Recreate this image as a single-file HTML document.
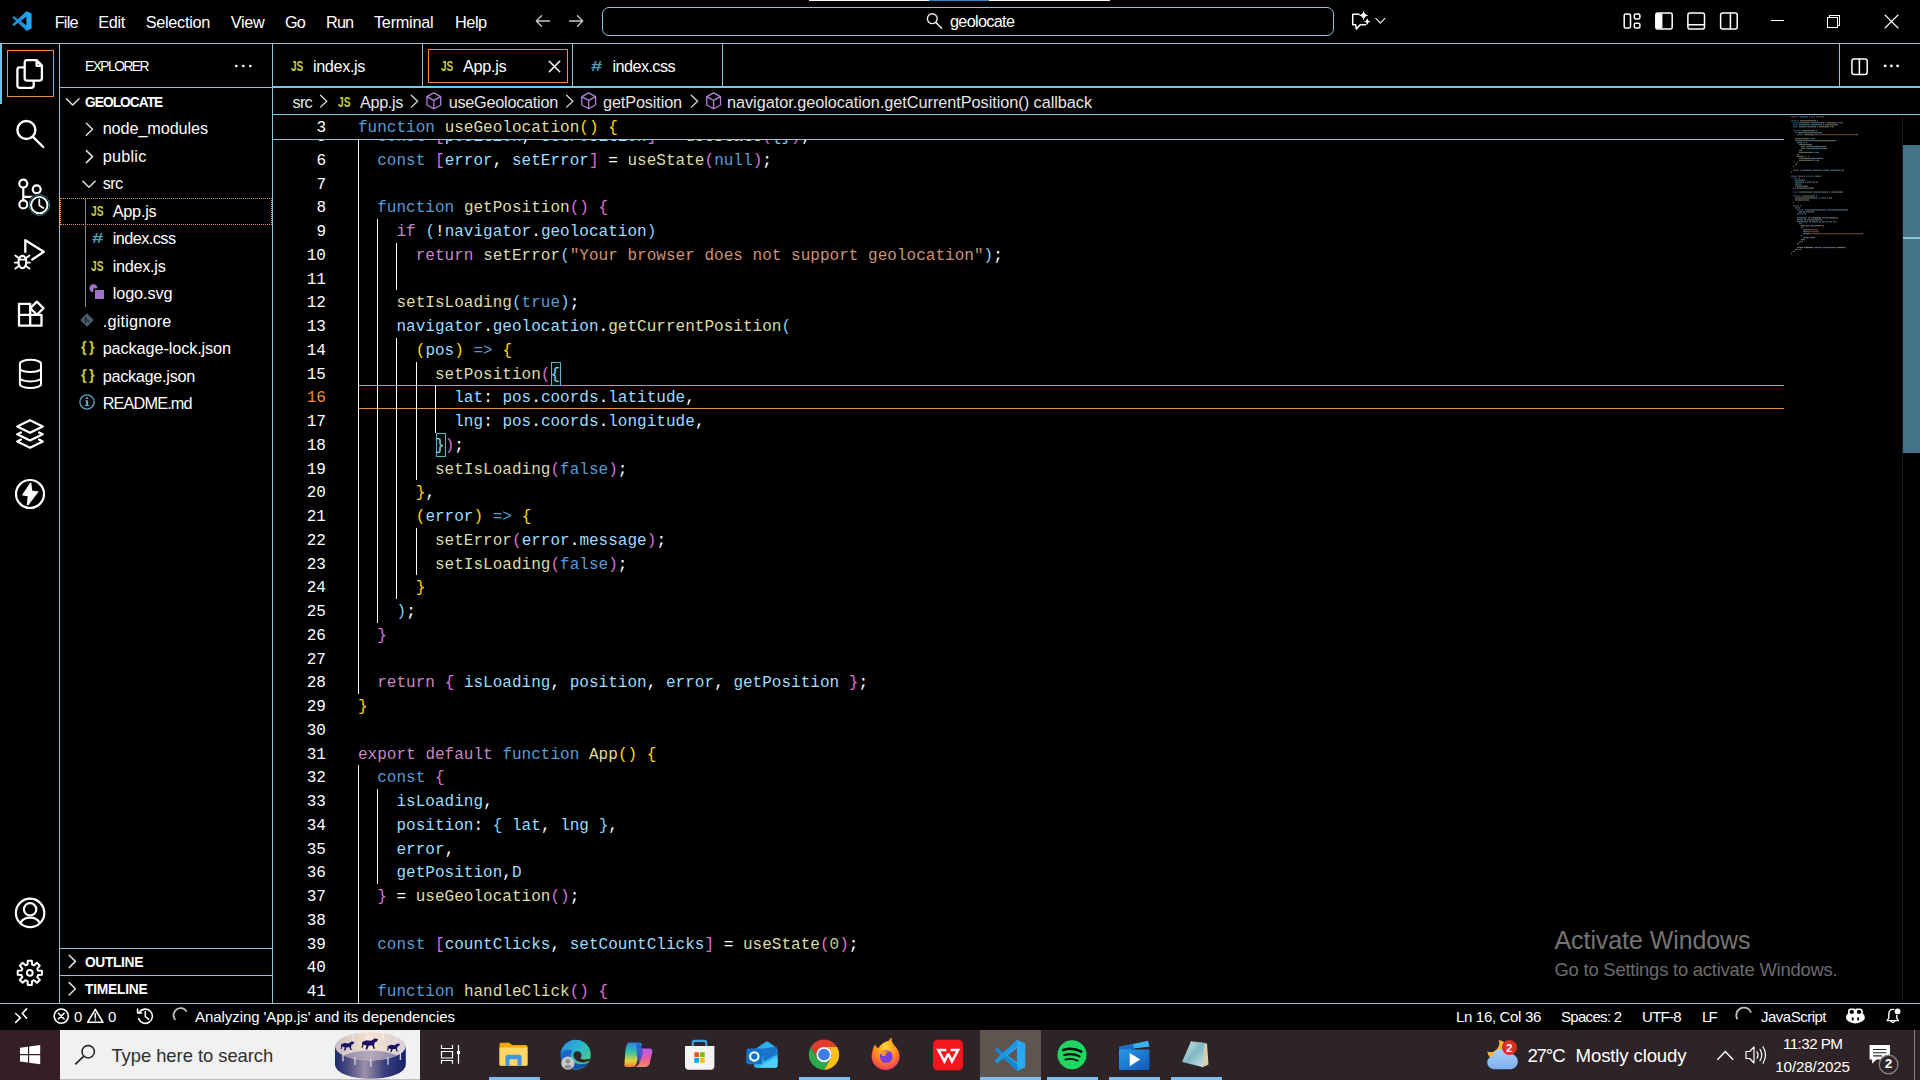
<!DOCTYPE html>
<html lang="en"><head><meta charset="utf-8"><title>App.js - geolocate - Visual Studio Code</title>
<style>
html,body{margin:0;padding:0;background:#000;}
body{width:1920px;height:1080px;overflow:hidden;position:relative;font-family:"Liberation Sans", sans-serif;color:#fff;}
body div,body span,body svg,body pre{position:absolute;white-space:pre;margin:0;}
pre.code{font-family:"Liberation Mono", monospace;font-size:16px;letter-spacing:0.022px;line-height:23.75px;color:#fff;}
pre.code i{font-style:normal;}
.k{color:#569CD6}.c{color:#C586C0}.f{color:#DCDCAA}.v{color:#9CDCFE}.s{color:#CE9178}.n{color:#B5CEA8}
.b1{color:#FFD700}.b2{color:#DA70D6}.b3{color:#87CEFA}
</style></head><body>
<div style="left:0px;top:43px;width:1920px;height:1px;background:#8EC5D8;"></div>
<div style="left:809px;top:0px;width:301px;height:1px;background:#ffffff;"></div>
<div style="left:929px;top:0px;width:60px;height:1px;background:#3A7FBC;"></div>
<div style="left:59px;top:44px;width:1px;height:959px;background:#8EC5D8;"></div>
<div style="left:0px;top:44px;width:2px;height:60px;background:#6FC3DF;"></div>
<div style="left:7px;top:50px;width:47px;height:47px;box-sizing:border-box;border:1px solid #EF8F3A;"></div>
<div style="left:272px;top:44px;width:1px;height:959px;background:#8EC5D8;"></div>
<div style="left:60px;top:87px;width:213px;height:1px;background:#8EC5D8;"></div>
<div style="left:273px;top:86px;width:1647px;height:2px;background:#7CC6E0;"></div>
<div style="left:273px;top:114px;width:1647px;height:1px;background:#8EC5D8;"></div>
<div style="left:273px;top:139px;width:1511px;height:1px;background:#8EC5D8;"></div>
<div style="left:60px;top:948px;width:212px;height:1px;background:#8EC5D8;"></div>
<div style="left:60px;top:975px;width:212px;height:1px;background:#8EC5D8;"></div>
<div style="left:0px;top:1003px;width:1920px;height:1px;background:#8EC5D8;"></div>
<div style="left:422px;top:44px;width:1px;height:42px;background:#8EC5D8;"></div>
<div style="left:572px;top:44px;width:1px;height:42px;background:#8EC5D8;"></div>
<div style="left:722px;top:44px;width:1px;height:42px;background:#8EC5D8;"></div>
<div style="left:1839px;top:44px;width:1px;height:42px;background:#8EC5D8;"></div>
<div style="left:428px;top:49px;width:140px;height:34px;box-sizing:border-box;border:1px solid #EF8F3A;"></div>
<div style="left:602px;top:7px;width:732px;height:29px;box-sizing:border-box;border:1px solid #8EC5D8;border-radius:7px;"></div>
<span style="left:54.7px;top:11.02px;font-size:16.25px;line-height:22.75px;color:#fff;letter-spacing:-0.747px;">File</span>
<span style="left:98.3px;top:11.02px;font-size:16.25px;line-height:22.75px;color:#fff;letter-spacing:-0.329px;">Edit</span>
<span style="left:145.7px;top:11.02px;font-size:16.25px;line-height:22.75px;color:#fff;letter-spacing:-0.284px;">Selection</span>
<span style="left:230.7px;top:11.02px;font-size:16.25px;line-height:22.75px;color:#fff;letter-spacing:-0.334px;">View</span>
<span style="left:285px;top:11.02px;font-size:16.25px;line-height:22.75px;color:#fff;letter-spacing:-0.994px;">Go</span>
<span style="left:326px;top:11.02px;font-size:16.25px;line-height:22.75px;color:#fff;letter-spacing:-0.837px;">Run</span>
<span style="left:374px;top:11.02px;font-size:16.25px;line-height:22.75px;color:#fff;letter-spacing:-0.263px;">Terminal</span>
<span style="left:455px;top:11.02px;font-size:16.25px;line-height:22.75px;color:#fff;letter-spacing:-0.430px;">Help</span>
<span style="left:950px;top:9.93px;font-size:16.25px;line-height:22.75px;color:#fff;letter-spacing:-0.687px;">geolocate</span>
<span style="left:85px;top:57.17px;font-size:13.75px;line-height:19.25px;color:#fff;letter-spacing:-1.486px;">EXPLORER</span>
<span style="left:85px;top:92.58px;font-size:13.75px;line-height:19.25px;color:#fff;letter-spacing:-0.975px;font-weight:700;">GEOLOCATE</span>
<span style="left:102.7px;top:116.82px;font-size:16.25px;line-height:22.75px;color:#fff;letter-spacing:-0.109px;">node_modules</span>
<span style="left:102.7px;top:145.03px;font-size:16.25px;line-height:22.75px;color:#fff;letter-spacing:0.222px;">public</span>
<span style="left:102.7px;top:172.12px;font-size:16.25px;line-height:22.75px;color:#fff;letter-spacing:-0.624px;">src</span>
<span style="left:112.7px;top:200.22px;font-size:16.25px;line-height:22.75px;color:#fff;letter-spacing:-0.229px;">App.js</span>
<span style="left:112.7px;top:227.03px;font-size:16.25px;line-height:22.75px;color:#fff;letter-spacing:-0.550px;">index.css</span>
<span style="left:112.7px;top:255.02px;font-size:16.25px;line-height:22.75px;color:#fff;letter-spacing:-0.289px;">index.js</span>
<span style="left:112.7px;top:282.02px;font-size:16.25px;line-height:22.75px;color:#fff;letter-spacing:-0.091px;">logo.svg</span>
<span style="left:102.7px;top:310.12px;font-size:16.25px;line-height:22.75px;color:#fff;letter-spacing:0.194px;">.gitignore</span>
<span style="left:102.7px;top:336.82px;font-size:16.25px;line-height:22.75px;color:#fff;letter-spacing:-0.105px;">package-lock.json</span>
<span style="left:102.7px;top:364.93px;font-size:16.25px;line-height:22.75px;color:#fff;letter-spacing:-0.289px;">package.json</span>
<span style="left:102.7px;top:391.93px;font-size:16.25px;line-height:22.75px;color:#fff;letter-spacing:-0.847px;">README.md</span>
<div style="left:60px;top:198px;width:212px;height:27px;box-sizing:border-box;border:1px dotted #EF8F3A;"></div>
<div style="left:85px;top:198px;width:1px;height:109px;background:#8a8a8a;"></div>
<span style="left:85px;top:952.58px;font-size:13.75px;line-height:19.25px;color:#fff;letter-spacing:-0.337px;font-weight:700;">OUTLINE</span>
<span style="left:85px;top:980.08px;font-size:13.75px;line-height:19.25px;color:#fff;letter-spacing:-0.209px;font-weight:700;">TIMELINE</span>
<span style="left:313px;top:54.62px;font-size:16.25px;line-height:22.75px;color:#fff;letter-spacing:-0.389px;">index.js</span>
<span style="left:463px;top:54.62px;font-size:16.25px;line-height:22.75px;color:#fff;letter-spacing:-0.312px;">App.js</span>
<span style="left:612.5px;top:54.62px;font-size:16.25px;line-height:22.75px;color:#fff;letter-spacing:-0.583px;">index.css</span>
<span style="left:292.5px;top:91.42px;font-size:16.25px;line-height:22.75px;color:#e6e6e6;letter-spacing:-0.724px;">src</span>
<span style="left:360px;top:91.42px;font-size:16.25px;line-height:22.75px;color:#e6e6e6;letter-spacing:-0.362px;">App.js</span>
<span style="left:448.7px;top:91.42px;font-size:16.25px;line-height:22.75px;color:#e6e6e6;letter-spacing:-0.260px;">useGeolocation</span>
<span style="left:603px;top:91.42px;font-size:16.25px;line-height:22.75px;color:#e6e6e6;letter-spacing:-0.128px;">getPosition</span>
<span style="left:727px;top:91.42px;font-size:16.25px;line-height:22.75px;color:#e6e6e6;letter-spacing:-0.034px;">navigator.geolocation.getCurrentPosition() callback</span>
<span style="left:74px;top:1006.0px;font-size:15px;line-height:21.0px;color:#fff;letter-spacing:-0.344px;">0</span>
<span style="left:108px;top:1006.0px;font-size:15px;line-height:21.0px;color:#fff;letter-spacing:-0.344px;">0</span>
<span style="left:195px;top:1006.0px;font-size:15px;line-height:21.0px;color:#fff;letter-spacing:-0.066px;">Analyzing 'App.js' and its dependencies</span>
<span style="left:1456px;top:1006.0px;font-size:15px;line-height:21.0px;color:#fff;letter-spacing:-0.326px;">Ln 16, Col 36</span>
<span style="left:1561px;top:1006.0px;font-size:15px;line-height:21.0px;color:#fff;letter-spacing:-0.691px;">Spaces: 2</span>
<span style="left:1642px;top:1006.0px;font-size:15px;line-height:21.0px;color:#fff;letter-spacing:-0.700px;">UTF-8</span>
<span style="left:1702px;top:1006.0px;font-size:15px;line-height:21.0px;color:#fff;letter-spacing:-1.758px;">LF</span>
<span style="left:1761px;top:1006.0px;font-size:15px;line-height:21.0px;color:#fff;letter-spacing:-0.503px;">JavaScript</span>
<div style="left:273px;top:140px;width:1517px;height:863px;overflow:hidden;">
<div style="left:85px;top:245px;width:1426px;height:24px;box-sizing:border-box;border-top:1px solid #EF8F3A;border-bottom:1px solid #EF8F3A;"></div>
<div style="left:85px;top:-16.0px;width:1px;height:570.0px;background:#ffffff;"></div>
<div style="left:104px;top:79.0px;width:1px;height:403.75px;background:#ffffff;"></div>
<div style="left:123px;top:102.75px;width:1px;height:47.5px;background:#ffffff;"></div>
<div style="left:123px;top:197.75px;width:1px;height:261.25px;background:#ffffff;"></div>
<div style="left:143px;top:221.5px;width:1px;height:118.75px;background:#ffffff;"></div>
<div style="left:143px;top:387.75px;width:1px;height:47.5px;background:#ffffff;"></div>
<div style="left:162px;top:245.25px;width:1px;height:47.5px;background:#ffffff;"></div>
<div style="left:85px;top:625.25px;width:1px;height:237.5px;background:#ffffff;"></div>
<div style="left:104px;top:649.0px;width:1px;height:95.0px;background:#ffffff;"></div>
<div style="left:278px;top:221.5px;width:10px;height:24px;box-sizing:border-box;border:1px solid #5fb0c8;background:#02120b;"></div>
<div style="left:163px;top:292.75px;width:10px;height:24px;box-sizing:border-box;border:1px solid #5fb0c8;background:#02120b;"></div>
<pre class="code" style="left:85px;top:-14.0px;">  <i class="k">const</i> <i class="b2">[</i><i class="v">position</i>, <i class="v">setPosition</i><i class="b2">]</i> = <i class="f">useState</i><i class="b2">(</i><i class="b3">{}</i><i class="b2">)</i>;</pre>
<pre class="code" style="left:0px;top:-14.0px;width:53px;text-align:right;color:#fff;">5</pre>
<pre class="code" style="left:85px;top:9.75px;">  <i class="k">const</i> <i class="b2">[</i><i class="v">error</i>, <i class="v">setError</i><i class="b2">]</i> = <i class="f">useState</i><i class="b2">(</i><i class="k">null</i><i class="b2">)</i>;</pre>
<pre class="code" style="left:0px;top:9.75px;width:53px;text-align:right;color:#fff;">6</pre>
<pre class="code" style="left:85px;top:33.5px;"></pre>
<pre class="code" style="left:0px;top:33.5px;width:53px;text-align:right;color:#fff;">7</pre>
<pre class="code" style="left:85px;top:57.25px;">  <i class="k">function</i> <i class="f">getPosition</i><i class="b2">()</i> <i class="b2">{</i></pre>
<pre class="code" style="left:0px;top:57.25px;width:53px;text-align:right;color:#fff;">8</pre>
<pre class="code" style="left:85px;top:81.0px;">    <i class="c">if</i> <i class="b3">(</i>!<i class="v">navigator</i>.<i class="v">geolocation</i><i class="b3">)</i></pre>
<pre class="code" style="left:0px;top:81.0px;width:53px;text-align:right;color:#fff;">9</pre>
<pre class="code" style="left:85px;top:104.75px;">      <i class="c">return</i> <i class="f">setError</i><i class="b3">(</i><i class="s">"Your browser does not support geolocation"</i><i class="b3">)</i>;</pre>
<pre class="code" style="left:0px;top:104.75px;width:53px;text-align:right;color:#fff;">10</pre>
<pre class="code" style="left:85px;top:128.5px;"></pre>
<pre class="code" style="left:0px;top:128.5px;width:53px;text-align:right;color:#fff;">11</pre>
<pre class="code" style="left:85px;top:152.25px;">    <i class="f">setIsLoading</i><i class="b3">(</i><i class="k">true</i><i class="b3">)</i>;</pre>
<pre class="code" style="left:0px;top:152.25px;width:53px;text-align:right;color:#fff;">12</pre>
<pre class="code" style="left:85px;top:176.0px;">    <i class="v">navigator</i>.<i class="v">geolocation</i>.<i class="f">getCurrentPosition</i><i class="b3">(</i></pre>
<pre class="code" style="left:0px;top:176.0px;width:53px;text-align:right;color:#fff;">13</pre>
<pre class="code" style="left:85px;top:199.75px;">      <i class="b1">(</i><i class="v">pos</i><i class="b1">)</i> <i class="k">=&gt;</i> <i class="b1">{</i></pre>
<pre class="code" style="left:0px;top:199.75px;width:53px;text-align:right;color:#fff;">14</pre>
<pre class="code" style="left:85px;top:223.5px;">        <i class="f">setPosition</i><i class="b2">(</i><i class="b3">{</i></pre>
<pre class="code" style="left:0px;top:223.5px;width:53px;text-align:right;color:#fff;">15</pre>
<pre class="code" style="left:85px;top:247.25px;">          <i class="v">lat</i>: <i class="v">pos</i>.<i class="v">coords</i>.<i class="v">latitude</i>,</pre>
<pre class="code" style="left:0px;top:247.25px;width:53px;text-align:right;color:#EF8F3A;">16</pre>
<pre class="code" style="left:85px;top:271.0px;">          <i class="v">lng</i>: <i class="v">pos</i>.<i class="v">coords</i>.<i class="v">longitude</i>,</pre>
<pre class="code" style="left:0px;top:271.0px;width:53px;text-align:right;color:#fff;">17</pre>
<pre class="code" style="left:85px;top:294.75px;">        <i class="b3">}</i><i class="b2">)</i>;</pre>
<pre class="code" style="left:0px;top:294.75px;width:53px;text-align:right;color:#fff;">18</pre>
<pre class="code" style="left:85px;top:318.5px;">        <i class="f">setIsLoading</i><i class="b2">(</i><i class="k">false</i><i class="b2">)</i>;</pre>
<pre class="code" style="left:0px;top:318.5px;width:53px;text-align:right;color:#fff;">19</pre>
<pre class="code" style="left:85px;top:342.25px;">      <i class="b1">}</i>,</pre>
<pre class="code" style="left:0px;top:342.25px;width:53px;text-align:right;color:#fff;">20</pre>
<pre class="code" style="left:85px;top:366.0px;">      <i class="b1">(</i><i class="v">error</i><i class="b1">)</i> <i class="k">=&gt;</i> <i class="b1">{</i></pre>
<pre class="code" style="left:0px;top:366.0px;width:53px;text-align:right;color:#fff;">21</pre>
<pre class="code" style="left:85px;top:389.75px;">        <i class="f">setError</i><i class="b2">(</i><i class="v">error</i>.<i class="v">message</i><i class="b2">)</i>;</pre>
<pre class="code" style="left:0px;top:389.75px;width:53px;text-align:right;color:#fff;">22</pre>
<pre class="code" style="left:85px;top:413.5px;">        <i class="f">setIsLoading</i><i class="b2">(</i><i class="k">false</i><i class="b2">)</i>;</pre>
<pre class="code" style="left:0px;top:413.5px;width:53px;text-align:right;color:#fff;">23</pre>
<pre class="code" style="left:85px;top:437.25px;">      <i class="b1">}</i></pre>
<pre class="code" style="left:0px;top:437.25px;width:53px;text-align:right;color:#fff;">24</pre>
<pre class="code" style="left:85px;top:461.0px;">    <i class="b3">)</i>;</pre>
<pre class="code" style="left:0px;top:461.0px;width:53px;text-align:right;color:#fff;">25</pre>
<pre class="code" style="left:85px;top:484.75px;">  <i class="b2">}</i></pre>
<pre class="code" style="left:0px;top:484.75px;width:53px;text-align:right;color:#fff;">26</pre>
<pre class="code" style="left:85px;top:508.5px;"></pre>
<pre class="code" style="left:0px;top:508.5px;width:53px;text-align:right;color:#fff;">27</pre>
<pre class="code" style="left:85px;top:532.25px;">  <i class="c">return</i> <i class="b2">{</i> <i class="v">isLoading</i>, <i class="v">position</i>, <i class="v">error</i>, <i class="v">getPosition</i> <i class="b2">}</i>;</pre>
<pre class="code" style="left:0px;top:532.25px;width:53px;text-align:right;color:#fff;">28</pre>
<pre class="code" style="left:85px;top:556.0px;"><i class="b1">}</i></pre>
<pre class="code" style="left:0px;top:556.0px;width:53px;text-align:right;color:#fff;">29</pre>
<pre class="code" style="left:85px;top:579.75px;"></pre>
<pre class="code" style="left:0px;top:579.75px;width:53px;text-align:right;color:#fff;">30</pre>
<pre class="code" style="left:85px;top:603.5px;"><i class="c">export</i> <i class="c">default</i> <i class="k">function</i> <i class="f">App</i><i class="b1">()</i> <i class="b1">{</i></pre>
<pre class="code" style="left:0px;top:603.5px;width:53px;text-align:right;color:#fff;">31</pre>
<pre class="code" style="left:85px;top:627.25px;">  <i class="k">const</i> <i class="b2">{</i></pre>
<pre class="code" style="left:0px;top:627.25px;width:53px;text-align:right;color:#fff;">32</pre>
<pre class="code" style="left:85px;top:651.0px;">    <i class="v">isLoading</i>,</pre>
<pre class="code" style="left:0px;top:651.0px;width:53px;text-align:right;color:#fff;">33</pre>
<pre class="code" style="left:85px;top:674.75px;">    <i class="v">position</i>: <i class="b3">{</i> <i class="v">lat</i>, <i class="v">lng</i> <i class="b3">}</i>,</pre>
<pre class="code" style="left:0px;top:674.75px;width:53px;text-align:right;color:#fff;">34</pre>
<pre class="code" style="left:85px;top:698.5px;">    <i class="v">error</i>,</pre>
<pre class="code" style="left:0px;top:698.5px;width:53px;text-align:right;color:#fff;">35</pre>
<pre class="code" style="left:85px;top:722.25px;">    <i class="v">getPosition</i>,<i class="v">D</i></pre>
<pre class="code" style="left:0px;top:722.25px;width:53px;text-align:right;color:#fff;">36</pre>
<pre class="code" style="left:85px;top:746.0px;">  <i class="b2">}</i> = <i class="f">useGeolocation</i><i class="b2">()</i>;</pre>
<pre class="code" style="left:0px;top:746.0px;width:53px;text-align:right;color:#fff;">37</pre>
<pre class="code" style="left:85px;top:769.75px;"></pre>
<pre class="code" style="left:0px;top:769.75px;width:53px;text-align:right;color:#fff;">38</pre>
<pre class="code" style="left:85px;top:793.5px;">  <i class="k">const</i> <i class="b2">[</i><i class="v">countClicks</i>, <i class="v">setCountClicks</i><i class="b2">]</i> = <i class="f">useState</i><i class="b2">(</i><i class="n">0</i><i class="b2">)</i>;</pre>
<pre class="code" style="left:0px;top:793.5px;width:53px;text-align:right;color:#fff;">39</pre>
<pre class="code" style="left:85px;top:817.25px;"></pre>
<pre class="code" style="left:0px;top:817.25px;width:53px;text-align:right;color:#fff;">40</pre>
<pre class="code" style="left:85px;top:841.0px;">  <i class="k">function</i> <i class="f">handleClick</i><i class="b2">()</i> <i class="b2">{</i></pre>
<pre class="code" style="left:0px;top:841.0px;width:53px;text-align:right;color:#fff;">41</pre>
</div>
<pre class="code" style="left:358px;top:116.6px;"><i class="k">function</i> <i class="f">useGeolocation</i><i class="b1">()</i> <i class="b1">{</i></pre>
<pre class="code" style="left:273px;top:116.6px;width:53px;text-align:right;">3</pre>
<div style="left:1903px;top:145px;width:17px;height:308px;background:#44738A;"></div>
<div style="left:1903px;top:237px;width:17px;height:2px;background:#86C2D8;"></div>
<div style="left:1902px;top:115px;width:1px;height:888px;background:#1a1a1a;"></div>
<svg style="left:0;top:0;opacity:.42" width="1920" height="300" viewBox="0 0 1920 300"><rect x="1791" y="116.20" width="6" height="1.25" fill="#C586C0"/><rect x="1798" y="116.20" width="1" height="1.25" fill="#e8e8e8"/><rect x="1800" y="116.20" width="8" height="1.25" fill="#9CDCFE"/><rect x="1809" y="116.20" width="1" height="1.25" fill="#e8e8e8"/><rect x="1811" y="116.20" width="4" height="1.25" fill="#C586C0"/><rect x="1816" y="116.20" width="7" height="1.25" fill="#CE9178"/><rect x="1823" y="116.20" width="1" height="1.25" fill="#e8e8e8"/><rect x="1791" y="120.16" width="8" height="1.25" fill="#569CD6"/><rect x="1800" y="120.16" width="14" height="1.25" fill="#DCDCAA"/><rect x="1814" y="120.16" width="2" height="1.25" fill="#e8e8e8"/><rect x="1817" y="120.16" width="1" height="1.25" fill="#e8e8e8"/><rect x="1793" y="122.14" width="5" height="1.25" fill="#569CD6"/><rect x="1799" y="122.14" width="1" height="1.25" fill="#e8e8e8"/><rect x="1800" y="122.14" width="9" height="1.25" fill="#9CDCFE"/><rect x="1809" y="122.14" width="1" height="1.25" fill="#e8e8e8"/><rect x="1811" y="122.14" width="12" height="1.25" fill="#9CDCFE"/><rect x="1823" y="122.14" width="1" height="1.25" fill="#e8e8e8"/><rect x="1825" y="122.14" width="1" height="1.25" fill="#e8e8e8"/><rect x="1827" y="122.14" width="8" height="1.25" fill="#DCDCAA"/><rect x="1835" y="122.14" width="1" height="1.25" fill="#e8e8e8"/><rect x="1836" y="122.14" width="5" height="1.25" fill="#569CD6"/><rect x="1841" y="122.14" width="2" height="1.25" fill="#e8e8e8"/><rect x="1793" y="124.12" width="5" height="1.25" fill="#569CD6"/><rect x="1799" y="124.12" width="1" height="1.25" fill="#e8e8e8"/><rect x="1800" y="124.12" width="8" height="1.25" fill="#9CDCFE"/><rect x="1808" y="124.12" width="1" height="1.25" fill="#e8e8e8"/><rect x="1810" y="124.12" width="11" height="1.25" fill="#9CDCFE"/><rect x="1821" y="124.12" width="1" height="1.25" fill="#e8e8e8"/><rect x="1823" y="124.12" width="1" height="1.25" fill="#e8e8e8"/><rect x="1825" y="124.12" width="8" height="1.25" fill="#DCDCAA"/><rect x="1833" y="124.12" width="5" height="1.25" fill="#e8e8e8"/><rect x="1793" y="126.10" width="5" height="1.25" fill="#569CD6"/><rect x="1799" y="126.10" width="1" height="1.25" fill="#e8e8e8"/><rect x="1800" y="126.10" width="5" height="1.25" fill="#9CDCFE"/><rect x="1805" y="126.10" width="1" height="1.25" fill="#e8e8e8"/><rect x="1807" y="126.10" width="8" height="1.25" fill="#9CDCFE"/><rect x="1815" y="126.10" width="1" height="1.25" fill="#e8e8e8"/><rect x="1817" y="126.10" width="1" height="1.25" fill="#e8e8e8"/><rect x="1819" y="126.10" width="8" height="1.25" fill="#DCDCAA"/><rect x="1827" y="126.10" width="1" height="1.25" fill="#e8e8e8"/><rect x="1828" y="126.10" width="4" height="1.25" fill="#569CD6"/><rect x="1832" y="126.10" width="2" height="1.25" fill="#e8e8e8"/><rect x="1793" y="130.06" width="8" height="1.25" fill="#569CD6"/><rect x="1802" y="130.06" width="11" height="1.25" fill="#DCDCAA"/><rect x="1813" y="130.06" width="2" height="1.25" fill="#e8e8e8"/><rect x="1816" y="130.06" width="1" height="1.25" fill="#e8e8e8"/><rect x="1795" y="132.04" width="2" height="1.25" fill="#C586C0"/><rect x="1798" y="132.04" width="2" height="1.25" fill="#e8e8e8"/><rect x="1800" y="132.04" width="9" height="1.25" fill="#9CDCFE"/><rect x="1809" y="132.04" width="1" height="1.25" fill="#e8e8e8"/><rect x="1810" y="132.04" width="11" height="1.25" fill="#9CDCFE"/><rect x="1821" y="132.04" width="1" height="1.25" fill="#e8e8e8"/><rect x="1797" y="134.02" width="6" height="1.25" fill="#C586C0"/><rect x="1804" y="134.02" width="8" height="1.25" fill="#DCDCAA"/><rect x="1812" y="134.02" width="1" height="1.25" fill="#e8e8e8"/><rect x="1813" y="134.02" width="43" height="1.25" fill="#CE9178"/><rect x="1856" y="134.02" width="2" height="1.25" fill="#e8e8e8"/><rect x="1795" y="137.98" width="12" height="1.25" fill="#DCDCAA"/><rect x="1807" y="137.98" width="1" height="1.25" fill="#e8e8e8"/><rect x="1808" y="137.98" width="4" height="1.25" fill="#569CD6"/><rect x="1812" y="137.98" width="2" height="1.25" fill="#e8e8e8"/><rect x="1795" y="139.96" width="9" height="1.25" fill="#9CDCFE"/><rect x="1804" y="139.96" width="1" height="1.25" fill="#e8e8e8"/><rect x="1805" y="139.96" width="11" height="1.25" fill="#9CDCFE"/><rect x="1816" y="139.96" width="1" height="1.25" fill="#e8e8e8"/><rect x="1817" y="139.96" width="18" height="1.25" fill="#DCDCAA"/><rect x="1835" y="139.96" width="1" height="1.25" fill="#e8e8e8"/><rect x="1797" y="141.94" width="1" height="1.25" fill="#e8e8e8"/><rect x="1798" y="141.94" width="3" height="1.25" fill="#9CDCFE"/><rect x="1801" y="141.94" width="1" height="1.25" fill="#e8e8e8"/><rect x="1803" y="141.94" width="2" height="1.25" fill="#569CD6"/><rect x="1806" y="141.94" width="1" height="1.25" fill="#e8e8e8"/><rect x="1799" y="143.92" width="11" height="1.25" fill="#DCDCAA"/><rect x="1810" y="143.92" width="2" height="1.25" fill="#e8e8e8"/><rect x="1801" y="145.90" width="3" height="1.25" fill="#9CDCFE"/><rect x="1804" y="145.90" width="1" height="1.25" fill="#e8e8e8"/><rect x="1806" y="145.90" width="3" height="1.25" fill="#9CDCFE"/><rect x="1809" y="145.90" width="1" height="1.25" fill="#e8e8e8"/><rect x="1810" y="145.90" width="6" height="1.25" fill="#9CDCFE"/><rect x="1816" y="145.90" width="1" height="1.25" fill="#e8e8e8"/><rect x="1817" y="145.90" width="8" height="1.25" fill="#9CDCFE"/><rect x="1825" y="145.90" width="1" height="1.25" fill="#e8e8e8"/><rect x="1801" y="147.88" width="3" height="1.25" fill="#9CDCFE"/><rect x="1804" y="147.88" width="1" height="1.25" fill="#e8e8e8"/><rect x="1806" y="147.88" width="3" height="1.25" fill="#9CDCFE"/><rect x="1809" y="147.88" width="1" height="1.25" fill="#e8e8e8"/><rect x="1810" y="147.88" width="6" height="1.25" fill="#9CDCFE"/><rect x="1816" y="147.88" width="1" height="1.25" fill="#e8e8e8"/><rect x="1817" y="147.88" width="9" height="1.25" fill="#9CDCFE"/><rect x="1826" y="147.88" width="1" height="1.25" fill="#e8e8e8"/><rect x="1799" y="149.86" width="3" height="1.25" fill="#e8e8e8"/><rect x="1799" y="151.84" width="12" height="1.25" fill="#DCDCAA"/><rect x="1811" y="151.84" width="1" height="1.25" fill="#e8e8e8"/><rect x="1812" y="151.84" width="5" height="1.25" fill="#569CD6"/><rect x="1817" y="151.84" width="2" height="1.25" fill="#e8e8e8"/><rect x="1797" y="153.82" width="2" height="1.25" fill="#e8e8e8"/><rect x="1797" y="155.80" width="1" height="1.25" fill="#e8e8e8"/><rect x="1798" y="155.80" width="5" height="1.25" fill="#9CDCFE"/><rect x="1803" y="155.80" width="1" height="1.25" fill="#e8e8e8"/><rect x="1805" y="155.80" width="2" height="1.25" fill="#569CD6"/><rect x="1808" y="155.80" width="1" height="1.25" fill="#e8e8e8"/><rect x="1799" y="157.78" width="8" height="1.25" fill="#DCDCAA"/><rect x="1807" y="157.78" width="1" height="1.25" fill="#e8e8e8"/><rect x="1808" y="157.78" width="5" height="1.25" fill="#9CDCFE"/><rect x="1813" y="157.78" width="1" height="1.25" fill="#e8e8e8"/><rect x="1814" y="157.78" width="7" height="1.25" fill="#9CDCFE"/><rect x="1821" y="157.78" width="2" height="1.25" fill="#e8e8e8"/><rect x="1799" y="159.76" width="12" height="1.25" fill="#DCDCAA"/><rect x="1811" y="159.76" width="1" height="1.25" fill="#e8e8e8"/><rect x="1812" y="159.76" width="5" height="1.25" fill="#569CD6"/><rect x="1817" y="159.76" width="2" height="1.25" fill="#e8e8e8"/><rect x="1797" y="161.74" width="1" height="1.25" fill="#e8e8e8"/><rect x="1795" y="163.72" width="2" height="1.25" fill="#e8e8e8"/><rect x="1793" y="165.70" width="1" height="1.25" fill="#e8e8e8"/><rect x="1793" y="169.66" width="6" height="1.25" fill="#C586C0"/><rect x="1800" y="169.66" width="1" height="1.25" fill="#e8e8e8"/><rect x="1802" y="169.66" width="9" height="1.25" fill="#9CDCFE"/><rect x="1811" y="169.66" width="1" height="1.25" fill="#e8e8e8"/><rect x="1813" y="169.66" width="8" height="1.25" fill="#9CDCFE"/><rect x="1821" y="169.66" width="1" height="1.25" fill="#e8e8e8"/><rect x="1823" y="169.66" width="5" height="1.25" fill="#9CDCFE"/><rect x="1828" y="169.66" width="1" height="1.25" fill="#e8e8e8"/><rect x="1830" y="169.66" width="11" height="1.25" fill="#9CDCFE"/><rect x="1842" y="169.66" width="2" height="1.25" fill="#e8e8e8"/><rect x="1791" y="171.64" width="1" height="1.25" fill="#e8e8e8"/><rect x="1791" y="175.60" width="6" height="1.25" fill="#C586C0"/><rect x="1798" y="175.60" width="7" height="1.25" fill="#C586C0"/><rect x="1806" y="175.60" width="8" height="1.25" fill="#569CD6"/><rect x="1815" y="175.60" width="3" height="1.25" fill="#DCDCAA"/><rect x="1818" y="175.60" width="2" height="1.25" fill="#e8e8e8"/><rect x="1821" y="175.60" width="1" height="1.25" fill="#e8e8e8"/><rect x="1793" y="177.58" width="5" height="1.25" fill="#569CD6"/><rect x="1799" y="177.58" width="1" height="1.25" fill="#e8e8e8"/><rect x="1795" y="179.56" width="9" height="1.25" fill="#9CDCFE"/><rect x="1804" y="179.56" width="1" height="1.25" fill="#e8e8e8"/><rect x="1795" y="181.54" width="8" height="1.25" fill="#9CDCFE"/><rect x="1803" y="181.54" width="1" height="1.25" fill="#e8e8e8"/><rect x="1805" y="181.54" width="1" height="1.25" fill="#e8e8e8"/><rect x="1807" y="181.54" width="3" height="1.25" fill="#9CDCFE"/><rect x="1810" y="181.54" width="1" height="1.25" fill="#e8e8e8"/><rect x="1812" y="181.54" width="3" height="1.25" fill="#9CDCFE"/><rect x="1816" y="181.54" width="2" height="1.25" fill="#e8e8e8"/><rect x="1795" y="183.52" width="5" height="1.25" fill="#9CDCFE"/><rect x="1800" y="183.52" width="1" height="1.25" fill="#e8e8e8"/><rect x="1795" y="185.50" width="11" height="1.25" fill="#9CDCFE"/><rect x="1806" y="185.50" width="1" height="1.25" fill="#e8e8e8"/><rect x="1807" y="185.50" width="1" height="1.25" fill="#9CDCFE"/><rect x="1793" y="187.48" width="1" height="1.25" fill="#e8e8e8"/><rect x="1795" y="187.48" width="1" height="1.25" fill="#e8e8e8"/><rect x="1797" y="187.48" width="14" height="1.25" fill="#DCDCAA"/><rect x="1811" y="187.48" width="3" height="1.25" fill="#e8e8e8"/><rect x="1793" y="191.44" width="5" height="1.25" fill="#569CD6"/><rect x="1799" y="191.44" width="1" height="1.25" fill="#e8e8e8"/><rect x="1800" y="191.44" width="11" height="1.25" fill="#9CDCFE"/><rect x="1811" y="191.44" width="1" height="1.25" fill="#e8e8e8"/><rect x="1813" y="191.44" width="14" height="1.25" fill="#9CDCFE"/><rect x="1827" y="191.44" width="1" height="1.25" fill="#e8e8e8"/><rect x="1829" y="191.44" width="1" height="1.25" fill="#e8e8e8"/><rect x="1831" y="191.44" width="8" height="1.25" fill="#DCDCAA"/><rect x="1839" y="191.44" width="4" height="1.25" fill="#e8e8e8"/><rect x="1793" y="195.40" width="8" height="1.25" fill="#569CD6"/><rect x="1802" y="195.40" width="11" height="1.25" fill="#DCDCAA"/><rect x="1813" y="195.40" width="2" height="1.25" fill="#e8e8e8"/><rect x="1816" y="195.40" width="1" height="1.25" fill="#e8e8e8"/><rect x="1795" y="197.38" width="14" height="1.25" fill="#DCDCAA"/><rect x="1809" y="197.38" width="2" height="1.25" fill="#e8e8e8"/><rect x="1811" y="197.38" width="5" height="1.25" fill="#9CDCFE"/><rect x="1816" y="197.38" width="1" height="1.25" fill="#e8e8e8"/><rect x="1818" y="197.38" width="2" height="1.25" fill="#569CD6"/><rect x="1821" y="197.38" width="5" height="1.25" fill="#9CDCFE"/><rect x="1827" y="197.38" width="1" height="1.25" fill="#e8e8e8"/><rect x="1829" y="197.38" width="3" height="1.25" fill="#e8e8e8"/><rect x="1795" y="199.36" width="11" height="1.25" fill="#DCDCAA"/><rect x="1806" y="199.36" width="3" height="1.25" fill="#e8e8e8"/><rect x="1793" y="201.34" width="1" height="1.25" fill="#e8e8e8"/><rect x="1793" y="205.30" width="6" height="1.25" fill="#C586C0"/><rect x="1800" y="205.30" width="1" height="1.25" fill="#e8e8e8"/><rect x="1795" y="207.28" width="1" height="1.25" fill="#e8e8e8"/><rect x="1796" y="207.28" width="3" height="1.25" fill="#569CD6"/><rect x="1799" y="207.28" width="1" height="1.25" fill="#e8e8e8"/><rect x="1797" y="209.26" width="1" height="1.25" fill="#e8e8e8"/><rect x="1798" y="209.26" width="6" height="1.25" fill="#569CD6"/><rect x="1805" y="209.26" width="7" height="1.25" fill="#9CDCFE"/><rect x="1812" y="209.26" width="2" height="1.25" fill="#e8e8e8"/><rect x="1814" y="209.26" width="11" height="1.25" fill="#9CDCFE"/><rect x="1825" y="209.26" width="1" height="1.25" fill="#e8e8e8"/><rect x="1827" y="209.26" width="8" height="1.25" fill="#9CDCFE"/><rect x="1835" y="209.26" width="2" height="1.25" fill="#e8e8e8"/><rect x="1837" y="209.26" width="9" height="1.25" fill="#9CDCFE"/><rect x="1846" y="209.26" width="2" height="1.25" fill="#e8e8e8"/><rect x="1799" y="211.24" width="3" height="1.25" fill="#ffffff"/><rect x="1803" y="211.24" width="2" height="1.25" fill="#ffffff"/><rect x="1806" y="211.24" width="8" height="1.25" fill="#9CDCFE"/><rect x="1797" y="213.22" width="2" height="1.25" fill="#e8e8e8"/><rect x="1799" y="213.22" width="6" height="1.25" fill="#569CD6"/><rect x="1805" y="213.22" width="1" height="1.25" fill="#e8e8e8"/><rect x="1797" y="217.18" width="1" height="1.25" fill="#e8e8e8"/><rect x="1798" y="217.18" width="9" height="1.25" fill="#9CDCFE"/><rect x="1808" y="217.18" width="2" height="1.25" fill="#e8e8e8"/><rect x="1811" y="217.18" width="1" height="1.25" fill="#e8e8e8"/><rect x="1812" y="217.18" width="1" height="1.25" fill="#569CD6"/><rect x="1813" y="217.18" width="1" height="1.25" fill="#e8e8e8"/><rect x="1814" y="217.18" width="7" height="1.25" fill="#ffffff"/><rect x="1822" y="217.18" width="8" height="1.25" fill="#9CDCFE"/><rect x="1830" y="217.18" width="5" height="1.25" fill="#e8e8e8"/><rect x="1835" y="217.18" width="1" height="1.25" fill="#569CD6"/><rect x="1836" y="217.18" width="2" height="1.25" fill="#e8e8e8"/><rect x="1797" y="219.16" width="1" height="1.25" fill="#e8e8e8"/><rect x="1798" y="219.16" width="5" height="1.25" fill="#9CDCFE"/><rect x="1804" y="219.16" width="2" height="1.25" fill="#e8e8e8"/><rect x="1807" y="219.16" width="1" height="1.25" fill="#e8e8e8"/><rect x="1808" y="219.16" width="1" height="1.25" fill="#569CD6"/><rect x="1809" y="219.16" width="2" height="1.25" fill="#e8e8e8"/><rect x="1811" y="219.16" width="5" height="1.25" fill="#9CDCFE"/><rect x="1816" y="219.16" width="3" height="1.25" fill="#e8e8e8"/><rect x="1819" y="219.16" width="1" height="1.25" fill="#569CD6"/><rect x="1820" y="219.16" width="2" height="1.25" fill="#e8e8e8"/><rect x="1797" y="221.14" width="2" height="1.25" fill="#e8e8e8"/><rect x="1799" y="221.14" width="9" height="1.25" fill="#9CDCFE"/><rect x="1809" y="221.14" width="2" height="1.25" fill="#e8e8e8"/><rect x="1812" y="221.14" width="1" height="1.25" fill="#e8e8e8"/><rect x="1813" y="221.14" width="5" height="1.25" fill="#9CDCFE"/><rect x="1819" y="221.14" width="2" height="1.25" fill="#e8e8e8"/><rect x="1822" y="221.14" width="3" height="1.25" fill="#9CDCFE"/><rect x="1826" y="221.14" width="2" height="1.25" fill="#e8e8e8"/><rect x="1829" y="221.14" width="3" height="1.25" fill="#9CDCFE"/><rect x="1833" y="221.14" width="2" height="1.25" fill="#e8e8e8"/><rect x="1836" y="221.14" width="1" height="1.25" fill="#e8e8e8"/><rect x="1799" y="223.12" width="1" height="1.25" fill="#e8e8e8"/><rect x="1800" y="223.12" width="1" height="1.25" fill="#569CD6"/><rect x="1801" y="223.12" width="1" height="1.25" fill="#e8e8e8"/><rect x="1801" y="225.10" width="4" height="1.25" fill="#ffffff"/><rect x="1806" y="225.10" width="3" height="1.25" fill="#ffffff"/><rect x="1810" y="225.10" width="8" height="1.25" fill="#9CDCFE"/><rect x="1818" y="225.10" width="2" height="1.25" fill="#e8e8e8"/><rect x="1820" y="225.10" width="3" height="1.25" fill="#CE9178"/><rect x="1823" y="225.10" width="1" height="1.25" fill="#e8e8e8"/><rect x="1801" y="227.08" width="1" height="1.25" fill="#e8e8e8"/><rect x="1802" y="227.08" width="1" height="1.25" fill="#569CD6"/><rect x="1803" y="229.06" width="6" height="1.25" fill="#9CDCFE"/><rect x="1809" y="229.06" width="1" height="1.25" fill="#e8e8e8"/><rect x="1810" y="229.06" width="8" height="1.25" fill="#CE9178"/><rect x="1803" y="231.04" width="3" height="1.25" fill="#9CDCFE"/><rect x="1806" y="231.04" width="1" height="1.25" fill="#e8e8e8"/><rect x="1807" y="231.04" width="12" height="1.25" fill="#CE9178"/><rect x="1803" y="233.02" width="4" height="1.25" fill="#9CDCFE"/><rect x="1807" y="233.02" width="2" height="1.25" fill="#e8e8e8"/><rect x="1809" y="233.02" width="53" height="1.25" fill="#CE9178"/><rect x="1862" y="233.02" width="1" height="1.25" fill="#e8e8e8"/><rect x="1801" y="235.00" width="1" height="1.25" fill="#e8e8e8"/><rect x="1803" y="236.98" width="1" height="1.25" fill="#e8e8e8"/><rect x="1804" y="236.98" width="3" height="1.25" fill="#9CDCFE"/><rect x="1807" y="236.98" width="2" height="1.25" fill="#e8e8e8"/><rect x="1810" y="236.98" width="1" height="1.25" fill="#e8e8e8"/><rect x="1811" y="236.98" width="3" height="1.25" fill="#9CDCFE"/><rect x="1814" y="236.98" width="1" height="1.25" fill="#e8e8e8"/><rect x="1801" y="238.96" width="2" height="1.25" fill="#e8e8e8"/><rect x="1803" y="238.96" width="1" height="1.25" fill="#569CD6"/><rect x="1804" y="238.96" width="1" height="1.25" fill="#e8e8e8"/><rect x="1799" y="240.94" width="2" height="1.25" fill="#e8e8e8"/><rect x="1801" y="240.94" width="1" height="1.25" fill="#569CD6"/><rect x="1802" y="240.94" width="1" height="1.25" fill="#e8e8e8"/><rect x="1797" y="242.92" width="2" height="1.25" fill="#e8e8e8"/><rect x="1797" y="246.88" width="1" height="1.25" fill="#e8e8e8"/><rect x="1798" y="246.88" width="1" height="1.25" fill="#569CD6"/><rect x="1799" y="246.88" width="1" height="1.25" fill="#e8e8e8"/><rect x="1800" y="246.88" width="3" height="1.25" fill="#ffffff"/><rect x="1804" y="246.88" width="9" height="1.25" fill="#ffffff"/><rect x="1814" y="246.88" width="8" height="1.25" fill="#9CDCFE"/><rect x="1823" y="246.88" width="1" height="1.25" fill="#e8e8e8"/><rect x="1824" y="246.88" width="11" height="1.25" fill="#9CDCFE"/><rect x="1835" y="246.88" width="1" height="1.25" fill="#e8e8e8"/><rect x="1837" y="246.88" width="5" height="1.25" fill="#ffffff"/><rect x="1842" y="246.88" width="2" height="1.25" fill="#e8e8e8"/><rect x="1844" y="246.88" width="1" height="1.25" fill="#569CD6"/><rect x="1845" y="246.88" width="1" height="1.25" fill="#e8e8e8"/><rect x="1795" y="248.86" width="2" height="1.25" fill="#e8e8e8"/><rect x="1797" y="248.86" width="3" height="1.25" fill="#569CD6"/><rect x="1800" y="248.86" width="1" height="1.25" fill="#e8e8e8"/><rect x="1793" y="250.84" width="2" height="1.25" fill="#e8e8e8"/><rect x="1791" y="252.82" width="1" height="1.25" fill="#e8e8e8"/></svg>
<div style="left:0px;top:1030px;width:1920px;height:50px;background:#2E2427;"></div>
<div style="left:0px;top:1030px;width:60px;height:50px;background:#341E27;"></div>
<div style="left:60px;top:1030px;width:360px;height:49px;background:#F1F1F1;"></div>
<div style="left:60px;top:1079px;width:360px;height:1px;background:#bdbdbd;"></div>
<div style="left:980px;top:1030px;width:61px;height:47px;background:#5F5450;"></div>
<div style="left:489px;top:1077px;width:51px;height:3px;background:#80BDF0;"></div>
<div style="left:799px;top:1077px;width:51px;height:3px;background:#80BDF0;"></div>
<div style="left:980px;top:1077px;width:61px;height:3px;background:#80BDF0;"></div>
<div style="left:1047px;top:1077px;width:51px;height:3px;background:#80BDF0;"></div>
<div style="left:1109px;top:1077px;width:51px;height:3px;background:#80BDF0;"></div>
<div style="left:1171px;top:1077px;width:51px;height:3px;background:#80BDF0;"></div>
<div style="left:1914px;top:1030px;width:1px;height:50px;background:#8a8282;"></div>
<span style="left:111.4px;top:1043.42px;font-size:18.4px;line-height:25.76px;color:#2f2f2f;letter-spacing:-0.039px;">Type here to search</span>
<span style="left:1527.4px;top:1042.58px;font-size:18.6px;line-height:26.04px;color:#fff;letter-spacing:-1.112px;">27°C</span>
<span style="left:1575.6px;top:1042.58px;font-size:18.6px;line-height:26.04px;color:#fff;letter-spacing:-0.142px;">Mostly cloudy</span>
<span style="left:1783px;top:1032.96px;font-size:15.2px;line-height:21.28px;color:#fff;letter-spacing:-0.574px;">11:32 PM</span>
<span style="left:1775.3px;top:1056.16px;font-size:15.2px;line-height:21.28px;color:#fff;letter-spacing:-0.142px;">10/28/2025</span>
<span style="left:1554.5px;top:923.1px;font-size:25px;line-height:35.0px;color:#747474;letter-spacing:-0.081px;">Activate Windows</span>
<span style="left:1554.5px;top:957.12px;font-size:18.4px;line-height:25.76px;color:#6c6c6c;letter-spacing:-0.209px;">Go to Settings to activate Windows.</span>
<svg style="left:0;top:0" width="1920" height="1080" viewBox="0 0 1920 1080"><defs>
<linearGradient id="gw" x1="0" x2="1"><stop offset="0" stop-color="#1b2a6e"/><stop offset=".18" stop-color="#4a4a80"/><stop offset=".42" stop-color="#9d90ab"/><stop offset=".7" stop-color="#3a3f7c"/><stop offset="1" stop-color="#14226a"/></linearGradient>
<linearGradient id="gi" x1="0" x2="1"><stop offset="0" stop-color="#c9c0c6"/><stop offset=".5" stop-color="#f7e3cf"/><stop offset="1" stop-color="#d8cfd6"/></linearGradient>
<linearGradient id="gf" x1="0" x2="1"><stop offset="0" stop-color="#8f86a6"/><stop offset=".5" stop-color="#b5a9bd"/><stop offset="1" stop-color="#7d7aa2"/></linearGradient>
<linearGradient id="gedge" x1="0" y1="0" x2="1" y2="1"><stop offset="0" stop-color="#2a8ae0"/><stop offset=".45" stop-color="#2cb7c9"/><stop offset="1" stop-color="#55d86a"/></linearGradient>
<linearGradient id="gedge2" x1="0" y1="0" x2="1" y2="1"><stop offset="0" stop-color="#1a6fd0"/><stop offset="1" stop-color="#114a9f"/></linearGradient>
<linearGradient id="gcp1" x1="0" y1="0" x2="0" y2="1"><stop offset="0" stop-color="#2f7fe8"/><stop offset=".4" stop-color="#35c4a0"/><stop offset=".75" stop-color="#e8d23a"/><stop offset="1" stop-color="#f07a3a"/></linearGradient>
<linearGradient id="gcp2" x1="0" y1="0" x2="0" y2="1"><stop offset="0" stop-color="#b65cf0"/><stop offset=".5" stop-color="#e85aa8"/><stop offset="1" stop-color="#f58a5a"/></linearGradient>
<linearGradient id="gol" x1="0" y1="0" x2="1" y2="1"><stop offset="0" stop-color="#2aa4ea"/><stop offset="1" stop-color="#35c8f2"/></linearGradient>
<radialGradient id="gff" cx=".5" cy=".3" r=".8"><stop offset="0" stop-color="#ffd83a"/><stop offset=".5" stop-color="#ff8a1a"/><stop offset="1" stop-color="#e8207a"/></radialGradient>
<linearGradient id="gmv" x1="0" y1="0" x2="1" y2="1"><stop offset="0" stop-color="#2a9be8"/><stop offset="1" stop-color="#0e58b8"/></linearGradient>
<linearGradient id="gnp" x1="0" y1="0" x2="1" y2="1"><stop offset="0" stop-color="#d8ecee"/><stop offset=".5" stop-color="#7fb8c2"/><stop offset="1" stop-color="#cfe4e6"/></linearGradient>
</defs><path d="M20 1047.8 L28 1046.7 V1054 H20 Z M29.2 1046.5 L40.2 1044.9 V1054 H29.2 Z M20 1055.2 H28 V1062.5 L20 1061.4 Z M29.2 1055.2 H40.2 V1064.3 L29.2 1062.700 Z" fill="#fff"/><circle cx="88.2" cy="1051.7" r="6.2" fill="none" stroke="#1f1f1f" stroke-width="1.5"/><path d="M83.8 1056.2 L75.3 1064.4" stroke="#1f1f1f" stroke-width="1.6" fill="none"/><clipPath id="rimclip"><ellipse cx="370.4" cy="1046.300" rx="35.4" ry="14.100"/></clipPath><path d="M335 1046.300 V1064.800 A35.4 14 0 0 0 405.800 1064.800 V1046.300 Z" fill="url(#gw)"/><ellipse cx="370.4" cy="1046.300" rx="35.4" ry="14.100" fill="url(#gi)"/><ellipse cx="370.4" cy="1064.500" rx="34.400" ry="14" fill="url(#gf)" clip-path="url(#rimclip)"/><path transform="translate(341 1041.5) scale(0.95)" d="M0 3 L4 1.5 L8 2 L11 0 L14 0.500 L13 2.500 L11 3.500 L10.500 6.500 L11.500 9 L10 9 L9 6 L6 6 L4.500 9.500 L3 9.500 L4 6 L1.500 5.500 L0.500 8 L-0.500 8 L0.300 5 Z" fill="#17125f"/><path transform="translate(362 1038.5) scale(1.15)" d="M0 3 L4 1.5 L8 2 L11 0 L14 0.500 L13 2.500 L11 3.500 L10.500 6.500 L11.500 9 L10 9 L9 6 L6 6 L4.500 9.500 L3 9.500 L4 6 L1.500 5.500 L0.500 8 L-0.500 8 L0.300 5 Z" fill="#17125f"/><path transform="translate(387.5 1043.5) scale(0.9)" d="M0 3 L4 1.5 L8 2 L11 0 L14 0.500 L13 2.500 L11 3.500 L10.500 6.500 L11.500 9 L10 9 L9 6 L6 6 L4.500 9.500 L3 9.500 L4 6 L1.500 5.500 L0.500 8 L-0.500 8 L0.300 5 Z" fill="#17125f"/><rect x="342.3" y="1054" width="1.4" height="7.500" fill="#e6e2ea" opacity=".85"/><rect x="354.3" y="1057.4" width="1.4" height="7.500" fill="#e6e2ea" opacity=".85"/><rect x="370.1" y="1059.4" width="1.4" height="7.500" fill="#e6e2ea" opacity=".85"/><rect x="387.3" y="1057.2" width="1.4" height="7.500" fill="#e6e2ea" opacity=".85"/><rect x="399.7" y="1052.5" width="1.4" height="7.500" fill="#e6e2ea" opacity=".85"/><rect x="352.5" y="1033.500" width="1" height="7" fill="#fff" opacity=".6"/><rect x="367.5" y="1033.500" width="1" height="7" fill="#fff" opacity=".6"/><rect x="383" y="1033.500" width="1" height="7" fill="#fff" opacity=".6"/><rect x="396" y="1033.500" width="1" height="7" fill="#fff" opacity=".6"/><path d="M441.5 1045 V1048.500 H452.500 V1045 M441.5 1063.800 V1060.500 H452.500 V1063.800 M441.5 1051.500 H452.500 V1058 H441.5 Z M458.500 1045 V1063.800" fill="none" stroke="#fff" stroke-width="1.2"/><rect x="457" y="1051" width="3" height="3" fill="#fff"/><path d="M499.5 1044.300 q0-1.500 1.500-1.500 h8.500 l2.500 2.200 h14 q1.500 0 1.500 1.500 v17.500 q0 1.500-1.500 1.500 h-25 q-1.500 0-1.500-1.500 Z" fill="#F2A900"/><path d="M499.5 1047.500 h28 v16.800 q0 1.500-1.500 1.500 h-25 q-1.500 0-1.500-1.500 Z" fill="#FFD869"/><path d="M505.500 1065.800 v-9 q0-2 2-2 h12 q2 0 2 2 v9 h-4 v-6.500 h-8 v6.500 Z" fill="#3C97E6"/><circle cx="575.7" cy="1054.7" r="15" fill="url(#gedge)"/><path d="M561 1052.500 Q566 1047.500 572.500 1050.500 Q568.500 1056 573 1061 Q579 1066.500 588.500 1062.500 A15 15 0 0 1 561 1052.500 Z" fill="url(#gedge2)"/><path d="M574 1052.500 Q577.500 1049.800 580.500 1052.500 Q582.500 1055 580.500 1058.500 Q584 1060.500 589.500 1058.800 L590 1060.500 Q582 1064.500 576.500 1060.500 Q572 1056.500 574 1052.500 Z" fill="#2E2626"/><circle cx="567.9" cy="1063.2" r="6.600" fill="#c9c9c9"/><circle cx="567.9" cy="1061.300" r="2.300" fill="#8f8f8f"/><path d="M563.700 1067 q4.200-5 8.400 0 q-4.200 3.600-8.400 0 Z" fill="#8f8f8f"/><path d="M629 1042.500 h10 q3.500 0 2.500 3.500 l-5 17.500 q-1 3.500-4.500 3.500 h-5 q-3.500 0-2.500-3.500 l0.800-12 q1-9 3.700-9 Z" fill="url(#gcp1)"/><path d="M640 1048.500 h9.500 q3.500 0 2.800 3.500 l-2.500 11 q-1 4-5 4 h-11 q4 0 5-4 Z" fill="url(#gcp2)"/><path d="M636.500 1043 q4 0 5 4 l1.500 6 l-4 12 q-1-6-2.500-10 Z" fill="#2a4fd0" opacity=".75"/><path d="M692.800 1046 v-3 q0-2.200 2.200-2.200 h9 q2.200 0 2.200 2.200 v3" fill="none" stroke="#35A4E0" stroke-width="2.200"/><path d="M685 1046 h29.400 v20 q0 3.700-3.700 3.700 h-22 q-3.700 0-3.700-3.700 Z" fill="#f4f4f4"/><rect x="694.3" y="1052.300" width="4.700" height="4.700" fill="#F25022"/><rect x="700" y="1052.300" width="4.700" height="4.700" fill="#7FBA00"/><rect x="694.3" y="1058" width="4.700" height="4.700" fill="#00A4EF"/><rect x="700" y="1058" width="4.700" height="4.700" fill="#FFB900"/><path d="M754 1050 l11.500-8 q1.500-1 3 0 l8 6 q1 0.800 1 2 v15.500 q0 2.200-2.200 2.200 h-19 q-2.300 0-2.300-2.200 Z" fill="url(#gol)"/><path d="M760 1049 l17 -2.500 v8 l-13 7 Z" fill="#1666c2" opacity=".85"/><path d="M758 1067.700 l19.500-11 v9 q0 2-2.200 2 Z" fill="#4fd2f7"/><rect x="746.3" y="1048.500" width="16" height="15.800" rx="2" fill="#1272CE"/><circle cx="754.3" cy="1056.400" r="4.200" fill="none" stroke="#fff" stroke-width="2.100"/><path d="M810.84 1047.10 A15.2 15.2 0 0 1 837.16 1047.10 L824.00 1047.10 A7.6 7.6 0 0 0 817.42 1058.50 Z" fill="#E33B2E"/><path d="M837.16 1047.10 A15.2 15.2 0 0 1 824.00 1069.90 L830.58 1058.50 A7.6 7.6 0 0 0 824.00 1047.10 Z" fill="#FBC116"/><path d="M824.00 1069.90 A15.2 15.2 0 0 1 810.84 1047.10 L817.42 1058.50 A7.6 7.6 0 0 0 830.58 1058.50 Z" fill="#2DA94F"/><circle cx="824" cy="1054.7" r="7.600" fill="#fff"/><circle cx="824" cy="1054.7" r="5.900" fill="#3F7EE8"/><path d="M872.300 1052 Q872.500 1047.500 875.300 1044.500 Q876 1047.500 878.300 1048.300 Q881.500 1042.500 889 1040.500 Q889.500 1038.500 891.800 1037.500 Q891.300 1042 894.500 1045.500 Q899.600 1050.500 899.600 1056.500 A14 13.600 0 0 1 871.600 1056.500 Q871.600 1054 872.300 1052 Z" fill="url(#gff)"/><circle cx="886.300" cy="1056.600" r="6.400" fill="#7a3fe0"/><path d="M880.500 1053 Q884.500 1049.500 889.500 1052 Q885.500 1052 885.800 1054.500 Q885.500 1056.500 882.500 1056 Z" fill="#ff9a1f"/><rect x="933" y="1039.800" width="30.100" height="30.400" rx="4.500" fill="#F5151F"/><path d="M946.300 1050 H938.400 L944.400 1061.400 L948.300 1053.600 M950.600 1050 H958.100 L951.900 1061.400 L948.300 1053.600" fill="none" stroke="#fff" stroke-width="2.500" stroke-linejoin="miter"/><g transform="translate(994.4 1039.400) scale(1.6)"><path d="M14.300 0.200 L19.300 2.600 L19.300 17.400 L14.300 19.800 L4 10 Z M14.100 5.600 L8.300 10 L14.100 14.400 Z" fill="#2AA8F2"/><path d="M0 6.600 L1.700 5 L14.500 16 L14.300 19.800 Z" fill="#1587D0"/><path d="M0 13.400 L1.700 15 L14.500 4 L14.300 0.200 Z" fill="#1C97E3"/></g><circle cx="1072" cy="1054.700" r="14.500" fill="#1ED760"/><path d="M1063.300 1050 q9.500-3 18 1.600" fill="none" stroke="#0b0b0b" stroke-width="2.600" stroke-linecap="round"/><path d="M1064.300 1055 q8-2.400 15.200 1.400" fill="none" stroke="#0b0b0b" stroke-width="2.200" stroke-linecap="round"/><path d="M1065.300 1059.600 q6.500-1.800 12.400 1.200" fill="none" stroke="#0b0b0b" stroke-width="1.800" stroke-linecap="round"/><path d="M1119 1047 l29-6.300 l1.600 5.800 l-30.600 4 Z" fill="#34b4f0"/><path d="M1119 1047 l14-3 l1 5.500 l-15 1.800 Z" fill="#1a6fcc"/><rect x="1119" y="1049.500" width="30.500" height="20.500" rx="1.500" fill="url(#gmv)"/><path d="M1129.700 1053 L1140.300 1059.600 L1129.700 1066.200 Z" fill="#fff"/><path d="M1192 1042 l15 1.500 l1.500 21 l-6.500 3 Z" fill="#d9cfa8"/><path d="M1191 1041.500 l14 1.500 l-2.500 24 l-20.500-5 Z" fill="url(#gnp)"/><path d="M1190.500 1041.700 l14.500 1.600" stroke="#9aa" stroke-width="1.400" stroke-dasharray="1 1" fill="none"/><linearGradient id="gcl" x1="0" y1="0" x2="0" y2="1"><stop offset="0" stop-color="#a9d2fb"/><stop offset="1" stop-color="#7eb0f0"/></linearGradient><path d="M1498.700 1040 A10.400 10.400 0 1 1 1487.200 1051.500 A9 9 0 0 0 1498.700 1040 Z" fill="#F4B43A"/><path d="M1493.600 1069.200 a6.600 6.600 0 0 1 -0.900 -13.100 a9.300 9.300 0 0 1 17.200 -2.400 a7.800 7.800 0 0 1 1.400 15.500 Z" fill="url(#gcl)"/><circle cx="1509.500" cy="1047.500" r="7.600" fill="#D93025"/><path d="M1717.400 1059.800 L1725.300 1051.600 L1733.200 1059.800" fill="none" stroke="#fff" stroke-width="1.400"/><path d="M1746 1051.500 h3.600 l4.400-4.500 v16 l-4.400-4.500 h-3.600 Z" fill="none" stroke="#fff" stroke-width="1.200" stroke-linejoin="round"/><path d="M1757 1051.800 q2 3.200 0 6.400 M1760 1049.300 q3.500 5.700 0 11.400 M1763 1046.800 q5 8.200 0 16.400" fill="none" stroke="#fff" stroke-width="1.200" stroke-linecap="round"/><path d="M1869.600 1045 h20.400 v14.500 h-13.500 l-4.400 4.200 v-4.200 h-2.500 Z" fill="#fff"/><path d="M1873 1049.500 h13.500 M1873 1052.700 h13.500 M1873 1055.900 h9" stroke="#2E2626" stroke-width="1.100" fill="none"/><circle cx="1888.600" cy="1064.500" r="9.300" fill="#2E2626" stroke="#8c8686" stroke-width="1.300"/></svg>
<span style="left:1506.1px;top:1039.65px;font-size:11.5px;line-height:16.1px;color:#fff;letter-spacing:0.394px;font-weight:700;">2</span>
<span style="left:1884.7px;top:1055.45px;font-size:13.5px;line-height:18.9px;color:#fff;letter-spacing:0.284px;font-weight:700;">2</span>
<svg style="left:0;top:0" width="1920" height="1080" viewBox="0 0 1920 1080"><path d="M26.6 11.2 L31.6 13.6 L31.6 28.4 L26.6 30.8 L16.3 21 L26.6 11.2 Z M26.4 16.6 L20.6 21 L26.4 25.4 Z" fill="#22A6F1"/><path d="M12.3 17.6 L14 16 L26.8 27 L26.6 30.8 L12.3 17.6 Z" fill="#1B8FD6"/><path d="M12.3 24.4 L14 26 L26.8 15 L26.6 11.2 L12.3 24.4 Z" fill="#1E9BE6"/><path d="M549.5 21 H536.5 M541.5 15.8 L536.3 21 L541.5 26.2" fill="none" stroke="#c8c8c8" stroke-width="1.3" stroke-linecap="round" stroke-linejoin="round" /><path d="M569.5 21 H582.5 M577.5 15.8 L582.7 21 L577.5 26.2" fill="none" stroke="#c8c8c8" stroke-width="1.3" stroke-linecap="round" stroke-linejoin="round" /><circle cx="932.3" cy="18.7" r="4.9" fill="none" stroke="#e8e8e8" stroke-width="1.4"/><path d="M935.8 22.4 L941.6 28.2" fill="none" stroke="#e8e8e8" stroke-width="1.5" stroke-linecap="round" stroke-linejoin="round" /><path d="M1359 14.3 H1352.7 V24.7 H1355.6 L1356.4 29 L1360.2 24.7 H1365.6" fill="none" stroke="#fff" stroke-width="1.5" stroke-linecap="round" stroke-linejoin="round" /><path d="M1363.6 10.6 Q1364.3 14.8 1368.4 15.5 Q1364.3 16.2 1363.6 20.4 Q1362.9 16.2 1358.8 15.5 Q1362.9 14.8 1363.6 10.6 Z" fill="#fff"/><path d="M1367.3 18.2 Q1367.8 21.1 1370.7 21.6 Q1367.8 22.1 1367.3 25 Q1366.8 22.1 1363.9 21.6 Q1366.8 21.1 1367.3 18.2 Z" fill="#fff"/><path d="M1375.8 18.3 L1380.3 23 L1384.8 18.3" fill="none" stroke="#ddd" stroke-width="1.2" stroke-linecap="round" stroke-linejoin="round" /><rect x="1624.2" y="14" width="6.2999999999999545" height="14.100000000000001" rx="1.6" fill="none" stroke="#fff" stroke-width="1.5"/><rect x="1634.3" y="14" width="5.600000000000136" height="4.899999999999999" rx="1.4" fill="none" stroke="#fff" stroke-width="1.5"/><rect x="1634.3" y="23.3" width="5.600000000000136" height="4.800000000000001" rx="1.4" fill="none" stroke="#fff" stroke-width="1.5"/><rect x="1655.8" y="13" width="16.40000000000009" height="16" rx="2" fill="none" stroke="#fff" stroke-width="1.5"/><path d="M1656 13.5 H1662.4 V28.5 H1656 Z" fill="#fff"/><rect x="1687.9" y="13" width="16.59999999999991" height="16" rx="2" fill="none" stroke="#fff" stroke-width="1.5"/><path d="M1688 24.7 H1704.4" fill="none" stroke="#fff" stroke-width="1.5" stroke-linecap="round" stroke-linejoin="round" /><rect x="1720.6" y="13" width="16.600000000000136" height="16" rx="2" fill="none" stroke="#fff" stroke-width="1.5"/><path d="M1730.4 13 V29" fill="none" stroke="#fff" stroke-width="1.5" stroke-linecap="round" stroke-linejoin="round" /><g shape-rendering="crispEdges"><path d="M1771 20 H1784 V21 H1771 Z" fill="#fff"/><rect x="1827.5" y="17.5" width="10" height="10" fill="#000" stroke="#fff" stroke-width="1"/><path d="M1829.5 17.5 V15.5 H1839.5 V25.5 H1837.5" fill="none" stroke="#fff" stroke-width="1"/></g><path d="M1885 15 L1898 28 M1898 15 L1885 28" fill="none" stroke="#fff" stroke-width="1.1" stroke-linecap="round" stroke-linejoin="round" /><path d="M36.6 60.1 H27 Q24.7 60.1 24.7 62.4 V78.3 Q24.7 80.6 27 80.6 H39.6 Q41.9 80.6 41.9 78.3 V65.6 L36.6 60.1 V65.8 H41.6" fill="none" stroke="#fff" stroke-width="2.3" stroke-linecap="round" stroke-linejoin="round" /><path d="M24.4 67.4 H19.7 Q17.4 67.4 17.4 69.7 V85.6 Q17.4 87.9 19.7 87.9 H31.4 Q33.7 87.9 33.7 85.6 V81" fill="none" stroke="#fff" stroke-width="2.3" stroke-linecap="round" stroke-linejoin="round" /><circle cx="26.4" cy="130" r="9" fill="none" stroke="#fff" stroke-width="2.4"/><path d="M33 136.9 L43.2 147" fill="none" stroke="#fff" stroke-width="2.4" stroke-linecap="round" stroke-linejoin="round" /><circle cx="23.3" cy="183.6" r="4" fill="none" stroke="#fff" stroke-width="2.2"/><circle cx="23.3" cy="204.4" r="4" fill="none" stroke="#fff" stroke-width="2.2"/><circle cx="36.7" cy="189.3" r="4" fill="none" stroke="#fff" stroke-width="2.2"/><path d="M23.3 187.8 V200.2 M23.3 196.9 H31 Q36.7 196.9 36.7 193.4" fill="none" stroke="#fff" stroke-width="2.2" stroke-linecap="round" stroke-linejoin="round" /><circle cx="39.3" cy="205.1" r="11.4" fill="#000"/><circle cx="39.3" cy="205.1" r="10.3" fill="none" stroke="#3d7f8c" stroke-width="1"/><circle cx="39.3" cy="205.1" r="8.2" fill="none" stroke="#fff" stroke-width="1.9"/><path d="M39.3 199.6 V205.6 L43.4 208" fill="none" stroke="#fff" stroke-width="1.7" stroke-linecap="round" stroke-linejoin="round" /><path d="M25.3 252 V240.2 L43.8 251.8 L32.3 259.5" fill="none" stroke="#fff" stroke-width="2.3" stroke-linecap="round" stroke-linejoin="round" /><ellipse cx="22.4" cy="262" rx="3.9" ry="6.1" fill="none" stroke="#fff" stroke-width="2.1"/><path d="M18.6 259.6 H26.2" fill="none" stroke="#fff" stroke-width="1.9" stroke-linecap="round" stroke-linejoin="round" /><path d="M18.4 257.8 L15.3 255.6 M26.4 257.8 L29.5 255.6 M18.3 262.6 H14.9 M26.5 262.6 H29.9 M18.9 266 L15.4 268.6 M25.9 266 L29.4 268.6" fill="none" stroke="#fff" stroke-width="1.9" stroke-linecap="round" stroke-linejoin="round" /><path d="M19 303.9 H30.2 V325.7 H19 Z M19 314.9 H41.5 V325.7 H30.2" fill="none" stroke="#fff" stroke-width="2.3" stroke-linecap="round" stroke-linejoin="round" /><path d="M36.9 301.6 L43.5 308.2 L36.9 314.8 L30.3 308.2 Z" fill="none" stroke="#fff" stroke-width="2.3" stroke-linecap="round" stroke-linejoin="round" /><path d="M19.9 363.7 A10.55 3.9 0 0 1 41 363.7 V384 A10.55 4.1 0 0 1 19.9 384 Z" fill="none" stroke="#fff" stroke-width="2" stroke-linecap="round" stroke-linejoin="round" /><path d="M19.9 368.6 A10.55 3.4 0 0 0 41 368.6 M19.9 378 A10.55 3.4 0 0 0 41 378" fill="none" stroke="#fff" stroke-width="2" stroke-linecap="round" stroke-linejoin="round" /><path d="M30 420.2 L42.8 426.4 L30 432.8 L17.2 426.4 Z" fill="none" stroke="#fff" stroke-width="2.2" stroke-linecap="round" stroke-linejoin="round" /><path d="M21 432.4 L17.2 434.2 L30 440.4 L42.8 434.2 L39 432.4" fill="none" stroke="#fff" stroke-width="2.2" stroke-linecap="round" stroke-linejoin="round" /><path d="M21 439.6 L17.2 441.4 L30 447.7 L42.8 441.4 L39 439.6" fill="none" stroke="#fff" stroke-width="2.2" stroke-linecap="round" stroke-linejoin="round" /><circle cx="30" cy="494" r="14" fill="none" stroke="#fff" stroke-width="2.2"/><path d="M31.3 482.8 L32.3 490.8 L38 491.2 Q38.6 491.6 38.2 492.2 L28.3 505.2 Q27 505.6 26.8 504.5 L27.7 496.3 L22.7 495.6 Q22 495 22.5 494.3 L30 483 Q31 482.2 31.3 482.8 Z" fill="#fff"/><circle cx="30.1" cy="912.9" r="14.2" fill="none" stroke="#fff" stroke-width="2.2"/><circle cx="30.1" cy="909.3" r="6.2" fill="none" stroke="#fff" stroke-width="2.2"/><path d="M20.6 922.6 Q23.5 917.6 30.1 917.6 Q36.7 917.6 39.6 922.6" fill="none" stroke="#fff" stroke-width="2.2" stroke-linecap="round" stroke-linejoin="round" /><path d="M27.53 964.50 L27.78 960.67 L31.82 960.67 L32.07 964.50 L34.06 965.33 L36.95 962.79 L39.81 965.65 L37.27 968.54 L38.10 970.53 L41.93 970.78 L41.93 974.82 L38.10 975.07 L37.27 977.06 L39.81 979.95 L36.95 982.81 L34.06 980.27 L32.07 981.10 L31.82 984.93 L27.78 984.93 L27.53 981.10 L25.54 980.27 L22.65 982.81 L19.79 979.95 L22.33 977.06 L21.50 975.07 L17.67 974.82 L17.67 970.78 L21.50 970.53 L22.33 968.54 L19.79 965.65 L22.65 962.79 L25.54 965.33 Z" fill="none" stroke="#fff" stroke-width="2" stroke-linecap="round" stroke-linejoin="round" /><circle cx="29.8" cy="972.8" r="2.9" fill="none" stroke="#fff" stroke-width="2"/><circle cx="236.3" cy="66" r="1.35" fill="#fff"/><circle cx="243.3" cy="66" r="1.35" fill="#fff"/><circle cx="250.3" cy="66" r="1.35" fill="#fff"/><path d="M66.4 98.8 L72.7 105 L79 98.8" fill="none" stroke="#e0e0e0" stroke-width="1.5" stroke-linecap="round" stroke-linejoin="round" /><path d="M86.4 123.2 L92.5 129.2 L86.4 135.2" fill="none" stroke="#e0e0e0" stroke-width="1.5" stroke-linecap="round" stroke-linejoin="round" /><path d="M86.4 150.6 L92.5 156.6 L86.4 162.6" fill="none" stroke="#e0e0e0" stroke-width="1.5" stroke-linecap="round" stroke-linejoin="round" /><path d="M82.9 181.2 L89 187.3 L95.1 181.2" fill="none" stroke="#e0e0e0" stroke-width="1.5" stroke-linecap="round" stroke-linejoin="round" /><path d="M69.2 955.2 L75.4 961.4 L69.2 967.6" fill="none" stroke="#e0e0e0" stroke-width="1.5" stroke-linecap="round" stroke-linejoin="round" /><path d="M69.2 982.6 L75.4 988.8 L69.2 995" fill="none" stroke="#e0e0e0" stroke-width="1.5" stroke-linecap="round" stroke-linejoin="round" /><circle cx="93.4" cy="288.2" r="3.9" fill="#A074C4"/><rect x="94.2" y="289.2" width="10.6" height="10.6" fill="#A074C4" stroke="#000" stroke-width="1.6"/><path d="M87 313.2 L93.8 320 L87 326.8 L80.2 320 Z" fill="#4d5f66"/><path d="M85.6 317.4 V322.8 M85.6 318.6 L88.8 321.6" fill="none" stroke="#1c2225" stroke-width="1.1" stroke-linecap="round" stroke-linejoin="round" /><circle cx="87" cy="402" r="7.1" fill="none" stroke="#5fa6c4" stroke-width="1.3"/><path d="M85.4 400.2 H88 V405 H89.2 V406 H84.8 V405 H85.9 V401.2 H85.1 Z" fill="#5fa6c4"/><circle cx="86.9" cy="398.2" r="1.15" fill="#5fa6c4"/><path d="M549.3 61.3 L559.7 71.7 M559.7 61.3 L549.3 71.7" fill="none" stroke="#fff" stroke-width="1.5" stroke-linecap="round" stroke-linejoin="round" /><rect x="1851.9" y="58.9" width="15.299999999999955" height="15.500000000000007" rx="2.2" fill="none" stroke="#fff" stroke-width="1.5"/><path d="M1859.4 59 V74.4" fill="none" stroke="#fff" stroke-width="1.5" stroke-linecap="round" stroke-linejoin="round" /><circle cx="1885.2" cy="65.9" r="1.4" fill="#fff"/><circle cx="1891.4" cy="65.9" r="1.4" fill="#fff"/><circle cx="1897.6" cy="65.9" r="1.4" fill="#fff"/><path d="M320.5 95.3 L326.8 101.2 L320.5 107.1" fill="none" stroke="#d8d8d8" stroke-width="1.3" stroke-linecap="round" stroke-linejoin="round" /><path d="M411.3 95.3 L417.6 101.2 L411.3 107.1" fill="none" stroke="#d8d8d8" stroke-width="1.3" stroke-linecap="round" stroke-linejoin="round" /><path d="M566.6 95.3 L572.9 101.2 L566.6 107.1" fill="none" stroke="#d8d8d8" stroke-width="1.3" stroke-linecap="round" stroke-linejoin="round" /><path d="M691.3 95.3 L697.5999999999999 101.2 L691.3 107.1" fill="none" stroke="#d8d8d8" stroke-width="1.3" stroke-linecap="round" stroke-linejoin="round" /><path d="M433.8 92.9 L440.7 96.6 V105 L433.8 108.8 L426.90000000000003 105 V96.6 Z M426.90000000000003 96.6 L433.8 100.4 L440.7 96.6 M433.8 100.4 V108.8" fill="none" stroke="#B180D7" stroke-width="1.3" stroke-linecap="round" stroke-linejoin="round" /><path d="M588.7 92.9 L595.6 96.6 V105 L588.7 108.8 L581.8000000000001 105 V96.6 Z M581.8000000000001 96.6 L588.7 100.4 L595.6 96.6 M588.7 100.4 V108.8" fill="none" stroke="#B180D7" stroke-width="1.3" stroke-linecap="round" stroke-linejoin="round" /><path d="M713.6 92.9 L720.5 96.6 V105 L713.6 108.8 L706.7 105 V96.6 Z M706.7 96.6 L713.6 100.4 L720.5 96.6 M713.6 100.4 V108.8" fill="none" stroke="#B180D7" stroke-width="1.3" stroke-linecap="round" stroke-linejoin="round" /><path d="M15.7 1013.5 L20.3 1017.9 L15.7 1022.4 M26.6 1008.9 L22.3 1013.5 L26.6 1018.1" fill="none" stroke="#fff" stroke-width="1.6" stroke-linecap="round" stroke-linejoin="round" /><circle cx="61.25" cy="1016.1" r="7.1" fill="none" stroke="#fff" stroke-width="1.6"/><path d="M58.4 1013.3 L64.1 1019 M64.1 1013.3 L58.4 1019" fill="none" stroke="#fff" stroke-width="1.6" stroke-linecap="round" stroke-linejoin="round" /><path d="M95.3 1009.3 L102.9 1022.2 H87.7 Z" fill="none" stroke="#fff" stroke-width="1.6" stroke-linecap="round" stroke-linejoin="round" /><path d="M95.3 1013.6 V1018" fill="none" stroke="#fff" stroke-width="1.6" stroke-linecap="round" stroke-linejoin="round" /><circle cx="95.3" cy="1020.1" r="0.8" fill="#fff"/><path d="M139.3 1012.4 A7.1 7.1 0 1 1 138.6 1018.6" fill="none" stroke="#fff" stroke-width="1.6" stroke-linecap="round" stroke-linejoin="round" /><path d="M137.6 1009 V1013 H141.6" fill="none" stroke="#fff" stroke-width="1.6" stroke-linecap="round" stroke-linejoin="round" /><path d="M145.3 1011.6 V1016.6 L148.6 1019.2" fill="none" stroke="#fff" stroke-width="1.6" stroke-linecap="round" stroke-linejoin="round" /><path d="M174.9 1019.2 A6.9 6.9 0 0 1 186.2 1011" fill="none" stroke="#c0c0c0" stroke-width="1.8" stroke-linecap="round" stroke-linejoin="round" /><path d="M1737.1 1018.6 A7.4 7.4 0 0 1 1750.8 1011.8" fill="none" stroke="#c0c0c0" stroke-width="1.8" stroke-linecap="round" stroke-linejoin="round" /><path d="M1850.6 1008.4 h3.2 q1.6 0 1.6 1.4 q0-1.4 1.6-1.4 h3.2 q2.6 0 2.6 3.4 v1.6 q1.9 1.4 1.9 3.4 v2.2 q-3.6 4.4-9.3 4.4 q-5.700 0-9.300-4.400 v-2.200 q0-2 1.900-3.400 v-1.600 q0-3.400 2.600-3.400 Z" fill="#fff"/><rect x="1849.6" y="1010" width="4.2" height="3.8" rx="1.5" fill="#000"/><rect x="1857" y="1010" width="4.2" height="3.8" rx="1.5" fill="#000"/><rect x="1851.8" y="1017.2" width="1.9" height="3.4" rx="0.8" fill="#000"/><rect x="1857.2" y="1017.2" width="1.9" height="3.4" rx="0.8" fill="#000"/><path d="M1887.2 1020.6 H1898.4 L1896.8 1018 V1014.4 Q1896.8 1009.4 1892.8 1009.4 Q1888.8 1009.4 1888.8 1014.4 V1018 Z" fill="none" stroke="#fff" stroke-width="1.4" stroke-linecap="round" stroke-linejoin="round" /><path d="M1891 1021.4 Q1892.8 1023.6 1894.600 1021.400" fill="none" stroke="#fff" stroke-width="1.4" stroke-linecap="round" stroke-linejoin="round" /><circle cx="1897.6" cy="1011.4" r="3.6" fill="#000"/><circle cx="1897.6" cy="1011.4" r="2.9" fill="#fff"/></svg>
<span style="left:91.1px;top:201.64px;font-size:13.8px;line-height:19.32px;color:#CBCB41;transform-origin:0 50%;transform:scaleX(0.7401);font-weight:700;">JS</span>
<span style="left:91.1px;top:256.64px;font-size:13.8px;line-height:19.32px;color:#CBCB41;transform-origin:0 50%;transform:scaleX(0.7401);font-weight:700;">JS</span>
<span style="left:291px;top:57.44px;font-size:13.8px;line-height:19.32px;color:#CBCB41;transform-origin:0 50%;transform:scaleX(0.7282);font-weight:700;">JS</span>
<span style="left:441px;top:57.44px;font-size:13.8px;line-height:19.32px;color:#CBCB41;transform-origin:0 50%;transform:scaleX(0.7282);font-weight:700;">JS</span>
<span style="left:338.3px;top:92.74px;font-size:13.8px;line-height:19.32px;color:#CBCB41;transform-origin:0 50%;transform:scaleX(0.7401);font-weight:700;">JS</span>
<span style="left:91.6px;top:226.7px;font-size:15px;line-height:21.0px;color:#519ABA;transform-origin:0 50%;transform:scaleX(1.3543);font-weight:700;">#</span>
<span style="left:591.2px;top:55.1px;font-size:15px;line-height:21.0px;color:#519ABA;transform-origin:0 50%;transform:scaleX(1.3423);font-weight:700;">#</span>
<span style="left:80.6px;top:337.25px;font-size:14.5px;line-height:20.3px;color:#CBCB41;transform-origin:0 50%;transform:scaleX(0.9901);font-weight:700;">{</span>
<span style="left:88.5px;top:337.25px;font-size:14.5px;line-height:20.3px;color:#CBCB41;transform-origin:0 50%;transform:scaleX(0.9901);font-weight:700;">}</span>
<span style="left:80.6px;top:364.85px;font-size:14.5px;line-height:20.3px;color:#CBCB41;transform-origin:0 50%;transform:scaleX(0.9901);font-weight:700;">{</span>
<span style="left:88.5px;top:364.85px;font-size:14.5px;line-height:20.3px;color:#CBCB41;transform-origin:0 50%;transform:scaleX(0.9901);font-weight:700;">}</span>
</body></html>
